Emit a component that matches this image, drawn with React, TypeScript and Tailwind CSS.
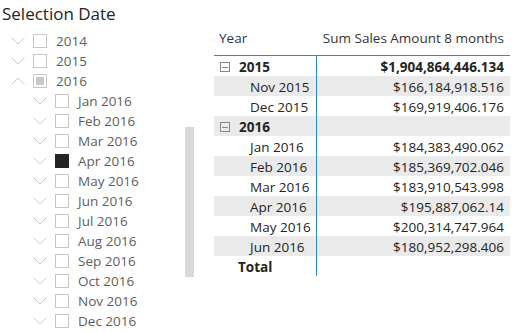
import React from "react";

const font = { fontFamily: '"Open Sans", "Noto Sans", sans-serif' };

function Chevron({ up }: { up?: boolean }) {
  return (
    <svg width="14" height="8" viewBox="0 0 14 8" className="shrink-0">
      <polyline
        points={up ? "0.5,7.5 7,1 13.5,7.5" : "0.5,0.5 7,7 13.5,0.5"}
        fill="none"
        stroke="#c8c8c8"
        strokeWidth="1"
      />
    </svg>
  );
}

function Box({ state }: { state?: "on" | "partial" }) {
  if (state === "on") return <div className="w-[14px] h-[14px] bg-[#252423] shrink-0" />;
  return (
    <div className="w-[14px] h-[14px] border border-[#c8c6c4] bg-white shrink-0 flex items-center justify-center">
      {state === "partial" && <div className="w-[8px] h-[8px] bg-[#c8c8c8]" />}
    </div>
  );
}

const years = [
  { label: "2014", up: false },
  { label: "2015", up: false },
  { label: "2016", up: true, state: "partial" as const },
];
const months = ["Jan", "Feb", "Mar", "Apr", "May", "Jun", "Jul", "Aug", "Sep", "Oct", "Nov", "Dec"];

function Slicer() {
  return (
    <div className="w-[214px] shrink-0 relative" style={font}>
      <div className="pl-[2px] pt-[2px] h-[31px] text-[17px] leading-[24px] text-[#252423]">Selection Date</div>
      {years.map((y) => (
        <div key={y.label} className="h-[20px] flex items-center pl-[11px]">
          <Chevron up={y.up} />
          <div className="ml-[8px]">
            <Box state={y.state} />
          </div>
          <span className="ml-[9px] text-[13.5px] text-[#605e5c]">{y.label}</span>
        </div>
      ))}
      {months.map((m) => (
        <div key={m} className="h-[20px] flex items-center pl-[33px]">
          <Chevron />
          <div className="ml-[8px]">
            <Box state={m === "Apr" ? "on" : undefined} />
          </div>
          <span className="ml-[9px] text-[13.5px] text-[#605e5c]">{m} 2016</span>
        </div>
      ))}
      <div className="absolute left-[185px] top-[127px] w-[9px] h-[150px] bg-[#d9d9d9]" />
    </div>
  );
}

function Collapse() {
  return (
    <div className="w-[10px] h-[10px] border border-[#8a8886] flex items-center justify-center shrink-0">
      <div className="w-[6px] h-px bg-[#8a8886]" />
    </div>
  );
}

type Row = { label: string; value: string; kind: "group" | "month" | "total"; shade: boolean };
const rows: Row[] = [
  { label: "2015", value: "$1,904,864,446.134", kind: "group", shade: false },
  { label: "Nov 2015", value: "$166,184,918.516", kind: "month", shade: true },
  { label: "Dec 2015", value: "$169,919,406.176", kind: "month", shade: false },
  { label: "2016", value: "", kind: "group", shade: true },
  { label: "Jan 2016", value: "$184,383,490.062", kind: "month", shade: false },
  { label: "Feb 2016", value: "$185,369,702.046", kind: "month", shade: true },
  { label: "Mar 2016", value: "$183,910,543.998", kind: "month", shade: false },
  { label: "Apr 2016", value: "$195,887,062.14", kind: "month", shade: true },
  { label: "May 2016", value: "$200,314,747.964", kind: "month", shade: false },
  { label: "Jun 2016", value: "$180,952,298.406", kind: "month", shade: true },
  { label: "Total", value: "", kind: "total", shade: false },
];

function Table() {
  return (
    <div className="w-[296px] shrink-0 pt-[26px] text-[#252423]" style={font}>
      <div className="h-[29px] flex items-start text-[13.5px] text-[#333333]">
        <div className="w-[103px] pl-[5px] pt-[2px]">Year</div>
        <div className="flex-1 text-right pr-[6px] pt-[2px]">Sum Sales Amount 8 months</div>
      </div>
      <div className="border-t border-[#2b88d8]">
        {rows.map((r) => (
          <div key={r.label} className={`h-[20px] flex text-[13.5px] ${r.shade ? "bg-[#eaeaea]" : ""}`}>
            <div className="w-[103px] border-r border-[#2b88d8] flex items-center pt-[2px]">
              {r.kind === "group" && (
                <div className="flex items-center pl-[6px]">
                  <Collapse />
                  <span className="ml-[9px] font-bold">{r.label}</span>
                </div>
              )}
              {r.kind === "month" && <span className="pl-[36px]">{r.label}</span>}
              {r.kind === "total" && <span className="pl-[24px] font-bold">{r.label}</span>}
            </div>
            <div className={`flex-1 text-right pr-[6px] pt-[2px] flex items-center justify-end ${r.kind === "group" ? "font-bold" : ""}`}>
              {r.value}
            </div>
          </div>
        ))}
      </div>
    </div>
  );
}

export default function App() {
  return (
    <div className="w-[512px] h-[333px] bg-white flex overflow-hidden">
      <Slicer />
      <Table />
    </div>
  );
}
